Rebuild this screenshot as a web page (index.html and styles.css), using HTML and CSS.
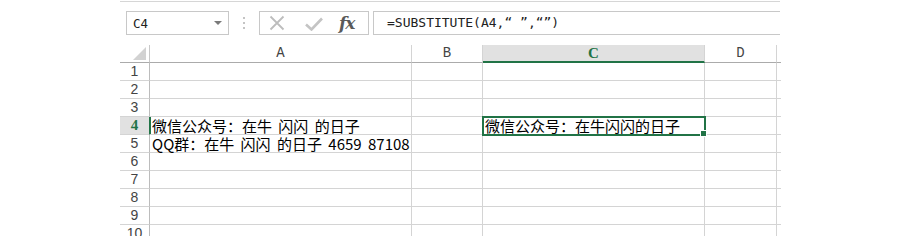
FILE: index.html
```html
<!DOCTYPE html>
<html lang="zh">
<head>
<meta charset="utf-8">
<title>Sheet</title>
<link rel="stylesheet" href="styles.css">
</head>
<body>
<div class="app">
  <div class="topline"></div>
  <div class="fbar">
    <div class="namebox">
      <span class="ref">C4</span>
      <svg class="arrow" width="8" height="5" viewBox="0 0 8 5"><polygon points="0,0 8,0 4,4" fill="#7a7a7a"/></svg>
    </div>
    <div class="dots">
      <svg width="4" height="12" viewBox="0 0 4 12"><rect x="1" y="0" width="2" height="2" fill="#c4c4c4"/><rect x="1" y="5" width="2" height="2" fill="#c4c4c4"/><rect x="1" y="10" width="2" height="2" fill="#c4c4c4"/></svg>
    </div>
    <div class="fxbox">
      <svg class="icon-x" width="16" height="16" viewBox="0 0 16 16"><path d="M1.5 1.5 L14.5 14.5 M14.5 1.5 L1.5 14.5" stroke="#bdbdbd" stroke-width="1.8" fill="none"/></svg>
      <svg class="icon-ok" width="18" height="14" viewBox="0 0 18 14"><path d="M1 7.5 L6.5 12.5 L17 1.5" stroke="#c4c4c4" stroke-width="2.6" fill="none"/></svg>
      <span class="fx">fx</span>
    </div>
    <div class="formula">=SUBSTITUTE(A4,“ ”,“”)</div>
  </div>
  <div class="grid">
    <div class="hd corner"><svg width="13" height="13" viewBox="0 0 13 13"><polygon points="13,0 13,13 0,13" fill="#d2d2d2"/></svg></div>
    <div class="hd col">A</div>
    <div class="hd col">B</div>
    <div class="hd col sel">C</div>
    <div class="hd col">D</div>
    <div class="hd end"></div>

    <div class="rh">1</div><div class="c"></div><div class="c"></div><div class="c"></div><div class="c"></div><div class="e"></div>
    <div class="rh">2</div><div class="c"></div><div class="c"></div><div class="c"></div><div class="c"></div><div class="e"></div>
    <div class="rh">3</div><div class="c"></div><div class="c"></div><div class="c"></div><div class="c"></div><div class="e"></div>
    <div class="rh sel">4</div><div class="c txt">微信公众号：在牛 闪闪 的日子</div><div class="c"></div><div class="c txt active">微信公众号：在牛闪闪的日子</div><div class="c"></div><div class="e"></div>
    <div class="rh">5</div><div class="c txt over">QQ群：在牛 闪闪 的日子 4659 87108</div><div class="c"></div><div class="c"></div><div class="c"></div><div class="e"></div>
    <div class="rh">6</div><div class="c"></div><div class="c"></div><div class="c"></div><div class="c"></div><div class="e"></div>
    <div class="rh">7</div><div class="c"></div><div class="c"></div><div class="c"></div><div class="c"></div><div class="e"></div>
    <div class="rh">8</div><div class="c"></div><div class="c"></div><div class="c"></div><div class="c"></div><div class="e"></div>
    <div class="rh">9</div><div class="c"></div><div class="c"></div><div class="c"></div><div class="c"></div><div class="e"></div>
    <div class="rh">10</div><div class="c"></div><div class="c"></div><div class="c"></div><div class="c"></div><div class="e"></div>
  </div>
</div>
</body>
</html>
```
FILE: styles.css
```css
html, body {
  margin: 0;
  padding: 0;
  background: #ffffff;
}
body {
  width: 900px;
  height: 236px;
  overflow: hidden;
}
.app {
  margin-left: 120px;
  width: 660px;
  padding-top: 1px;
}
.topline {
  height: 1px;
  background: #d6d6d6;
}
.fbar {
  display: flex;
  height: 24px;
  margin-top: 9px;
}
.namebox {
  margin-left: 6px;
  width: 103px;
  box-sizing: border-box;
  border: 1px solid #c8c8c8;
  display: flex;
  align-items: center;
  justify-content: space-between;
  padding: 0 6px 0 6px;
}
.ref {
  font-family: "DejaVu Sans Mono", monospace;
  font-size: 12.5px;
  color: #222;
}
.arrow {
  margin-top: 1px;
}
.dots {
  width: 30px;
  display: flex;
  align-items: center;
  justify-content: center;
}
.fxbox {
  width: 110px;
  box-sizing: border-box;
  border: 1px solid #c8c8c8;
  display: flex;
  align-items: center;
  padding-left: 9px;
}
.icon-ok {
  margin-left: 20px;
  margin-top: 2px;
}
.fx {
  margin-left: 16px;
  font-family: "DejaVu Serif", "Liberation Serif", serif;
  font-style: italic;
  font-weight: bold;
  font-size: 17px;
  color: #5a5a5a;
  letter-spacing: -1px;
}
.formula {
  flex: 1;
  margin-left: 4px;
  box-sizing: border-box;
  border: 1px solid #c8c8c8;
  border-right: none;
  padding-left: 13px;
  font-family: "DejaVu Sans Mono", monospace;
  font-size: 13px;
  line-height: 22px;
  color: #222;
}
.grid {
  display: grid;
  grid-template-columns: 30px 262px 71px 222px 72px 4px;
  grid-auto-rows: 18px;
  margin-top: 10px;
}
.grid > div {
  box-sizing: border-box;
  border-bottom: 1px solid #d4d4d4;
  border-right: 1px solid #d4d4d4;
}
.grid > .hd {
  border-bottom: 1px solid #ababab;
  font-family: "Liberation Mono", monospace;
  font-size: 14px;
  color: #444;
  text-align: center;
  line-height: 17px;
}
.grid > .corner {
  border-right-color: #c8c8c8;
  display: flex;
  align-items: flex-end;
  justify-content: flex-end;
  padding: 0 3px 2px 0;
}
.grid > .hd.sel {
  background: #e1e1e1;
  border-bottom: 2px solid #217346;
  color: #217346;
  font-family: "Liberation Serif", serif;
  font-weight: bold;
  font-size: 15px;
}
.grid > .end, .grid > .e {
  border-right: none;
}
.grid > .rh {
  border-right: 1px solid #bcbcbc;
  font-family: "Liberation Sans", sans-serif;
  font-size: 14px;
  color: #444;
  text-align: center;
  line-height: 17px;
}
.grid > .rh.sel {
  background: #e1e1e1;
  border-right: 1px solid #217346;
  box-shadow: 1px 0 0 #217346;
  color: #217346;
  font-family: "Liberation Serif", serif;
  font-weight: bold;
  font-size: 15px;
}
.txt {
  font-family: "Noto Sans CJK SC", sans-serif;
  font-size: 15px;
  line-height: 17px;
  color: #000;
  padding-left: 2px;
  white-space: nowrap;
  word-spacing: 3px;
}
.over {
  overflow: visible;
}
.active {
  position: relative;
  z-index: 1;
  outline: 2px solid #217346;
  outline-offset: -1px;
}
.active::after {
  content: "";
  position: absolute;
  right: -3px;
  bottom: -3px;
  width: 5px;
  height: 5px;
  background: #217346;
  border: 1px solid #ffffff;
}
```
